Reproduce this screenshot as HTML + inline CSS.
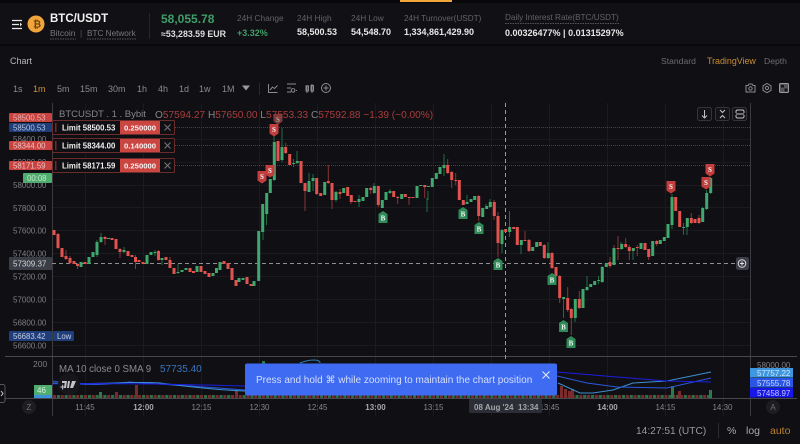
<!DOCTYPE html>
<html><head><meta charset="utf-8"><style>
html,body{margin:0;padding:0;width:800px;height:444px;overflow:hidden;background:#0a0a0d}
svg{display:block}
text{font-family:"Liberation Sans",sans-serif}
</style></head><body>
<svg width="800" height="444" viewBox="0 0 800 444" xmlns="http://www.w3.org/2000/svg">
<rect width="800" height="444" fill="#08080a"/>
<rect x="0" y="3" width="800" height="41" fill="#111115"/>
<rect x="0" y="46" width="800" height="398" fill="#101014"/>
<rect x="400" y="0" width="52" height="2" fill="#f0a63a"/>

<!-- header -->
<path d="M12 20.5H22M12 24.5H19M12 28.5H22" stroke="#e8e8e8" stroke-width="1.3" fill="none"/>
<path d="M20 22.5l2 2-2 2" fill="#e8e8e8"/>
<circle cx="36" cy="24" r="8.5" fill="#f2a53a"/>
<text x="33" y="27.5" font-size="10" font-weight="700" fill="#6d4310">₿</text>
<text x="50" y="22" font-size="11.5" font-weight="700" fill="#f2f2f2">BTC/USDT</text>
<text x="50" y="36" font-size="8.5" fill="#77777c">Bitcoin</text>
<text x="80" y="36" font-size="8.5" fill="#55555a">|</text>
<text x="87" y="36" font-size="8.2" fill="#77777c">BTC Network</text>
<path d="M50 39H76M87 39H136" stroke="#55555a" stroke-dasharray="1.5 1"/>
<rect x="149" y="13" width="1" height="26" fill="#26262b"/>
<text x="161" y="23" font-size="12" font-weight="700" fill="#3f9e68">58,055.78</text>
<text x="161" y="37" font-size="8.8" font-weight="700" fill="#dedede">≈53,283.59 EUR</text>
<text x="237" y="21" font-size="8.3" fill="#626267">24H Change</text>
<text x="237" y="36" font-size="9" font-weight="700" fill="#3f9e68">+3.32%</text>
<text x="297" y="21" font-size="8.3" fill="#626267">24H High</text>
<text x="297" y="35" font-size="9" font-weight="700" fill="#e6e6e6">58,500.53</text>
<text x="351" y="21" font-size="8.3" fill="#626267">24H Low</text>
<text x="351" y="35" font-size="9" font-weight="700" fill="#e6e6e6">54,548.70</text>
<text x="404" y="21" font-size="8.2" fill="#626267">24H Turnover(USDT)</text>
<text x="404" y="35" font-size="9" font-weight="700" fill="#e6e6e6">1,334,861,429.90</text>
<text x="505" y="20" font-size="8.2" fill="#626267">Daily Interest Rate(BTC/USDT)</text>
<path d="M505 23.5H619" stroke="#55555a" stroke-dasharray="1.5 1"/>
<text x="505" y="36" font-size="9" font-weight="700" fill="#e6e6e6">0.00326477% | 0.01315297%</text>

<!-- tabs -->
<text x="10" y="64" font-size="9" fill="#b9b9bd">Chart</text>
<text x="661" y="64" font-size="8.6" fill="#6c6c71">Standard</text>
<text x="707" y="64" font-size="8.9" fill="#c98d35">TradingView</text>
<text x="764" y="64" font-size="8.6" fill="#6c6c71">Depth</text>

<!-- toolbar -->
<g font-size="9" fill="#8a8a8f">
<text x="13" y="92">1s</text><text x="33" y="92" fill="#d08f35">1m</text><text x="57" y="92">5m</text><text x="80" y="92">15m</text><text x="108" y="92">30m</text><text x="137" y="92">1h</text><text x="158" y="92">4h</text><text x="179" y="92">1d</text><text x="199" y="92">1w</text><text x="222" y="92">1M</text>
</g>
<path d="M242 85.5h8l-4 5z" fill="#9a9a9e"/>
<rect x="259" y="83" width="1" height="12" fill="#2a2a2e"/>
<g fill="none" stroke="#8a8a8f" stroke-width="1">
<path d="M268.5 84v8.5h9M270 90l2.500-3 2 1.500 3-3"/>
<path d="M287 84h9M287 88h4M287 92h4M293 88.500a1.800 1.800 0 1 0 .1 0M296 90.500h1"/>
<path d="M307 85v8M306 86h2.500v5H306zM312 84v9M311 85.500h2.500v5.500H311z"/>
<circle cx="326" cy="88" r="4.500"/><path d="M326 85.500v5M323.500 88h5"/>
</g>
<g fill="none" stroke="#8a8a8f" stroke-width="1">
<path d="M746 85.500h2l1-1.500h3l1 1.500h2v6.500h-9z"/><circle cx="750.500" cy="88.500" r="1.700"/>
<path d="M767 83.500l4 2.300v4.600l-4 2.300-4-2.300v-4.600z"/><circle cx="767" cy="88" r="1.600"/>
</g>
<rect x="779.500" y="83.500" width="9" height="9" rx="1.200" fill="#55555a" stroke="#9a9a9e"/>
<path d="M781 85h3v2.500h-3zM784.500 88.500h3v3h-3z" fill="#16161a"/>

<!-- grid -->
<path d="M85.500 103V416M143.500 103V416M201.500 103V416M259.500 103V416M317.500 103V416M375.500 103V416M433.500 103V416M491.500 103V416M549.500 103V416M607.500 103V416M665.500 103V416M723.500 103V416M52 139.500H750M52 162.500H750M52 185.500H750M52 207.500H750M52 230.500H750M52 253.500H750M52 276.500H750M52 299.500H750M52 322.500H750M52 345.500H750" stroke="#1a1a1f" fill="none"/>
<path d="M52.500 103V416M750.500 103V416" stroke="#3b3b40" fill="none"/>
<path d="M5 356.500H797M5 398.500H797" stroke="#48484c" fill="none"/>

<!-- order lines -->
<g stroke="#7a2f2f" stroke-dasharray="1 1" fill="none">
<path d="M175 127.500H750M175 145.500H750M175 165.500H750"/>
</g>
<!-- crosshair -->
<path d="M505.500 103V360" stroke="#9a9a9e" stroke-dasharray="4 3" fill="none"/>
<path d="M52 263.500H737" stroke="#8f8f93" stroke-dasharray="4 3" fill="none"/>

<!-- candle wicks -->
<g fill="none" stroke-width="1">
<path stroke="#1f6e43" d="M101 233V243M124 247V253M155 250V256M162 258V265M178 264V274M97 240V257M263 204V240M266.500 193V225M274 133V181M282 128V162M293.500 159V167M297 151V164M309 173V192M313 174V191M336 191V202M359 195V207M374 183V194M427 198V212M390 189V194M428 191V200M444 154V176M467 195V204M486 204V209M490 199V208M502 229V253M509.500 211V237M521 240V254M548 242V259M563.500 297V318M575 299V322M587 276V291M598.500 276V284M602 266V283M621 242V250M633 248V260M672 194V229M683.500 223V235M687 218V235M702.500 207V222M706.500 190V210M710.500 177V194"/>
<path stroke="#8a3535" d="M58 233V249M66 250V260M70 256V264M77.500 263V269M105 236V245M120 248V258M135.500 255V269M158.500 250V261M170 257V268M285.700 143V154M301 161V183M305 183V211M316.700 178V195M328.300 165V184M332 183V209M340 189V199M351 196V204M370.700 187V194M378.300 186V207M397.700 196V204M409 197V205M424.700 185V198M447.700 159V174M451.700 171V188M455.700 173V185M478.700 195V221M494 200V220M498 212V257M525 231V241M529 239V252M544.300 244V259M552 252V269M559.700 275V303M567.700 287V312M571.300 308V335M579.300 291V309M610 257V268M614 245V262M618 236V260M625.700 238V248M629.300 245V260M637.300 245V256M648.700 249V260M656.700 240V246M691.300 213V224M699 215V224"/>
</g>
<!-- candle bodies -->
<path fill="none" stroke="#e2524f" stroke-width="3" d="M54 230V235M58 234V248M62 248V257M66 256V259M70 258V263M74 261V264M77.500 264V266M85 262V264M105 237V239M112 238V240M116 239V249M120 249V252M128 251V256M132 255V257M135.500 257V262M139 260V262M143 262V264M158.500 251V260M166 257V260M170 260V268M174 268V274M190 268V272M193.500 271V273M201 266V272M205 271V274M209 273V277M224 261V264M228 263V269M232 268V280M236 280V286M247 277V284M251 284V286M278 141V161M285.700 147V153M289.700 154V165M301 161V183M305 183V191M316.700 178V194M320.700 193V196M328.300 181V183M332 183V200M340 192V194M347.700 187V196M351.300 195V202M355 201V202M370.700 188V190M378.300 186V205M393.700 191V197M397.700 197V198M405.300 194V197M409.300 197V198M413 197V198M424.700 185V187M447.700 165V173M451.700 172V180M455.700 180V181M459.300 180V200M463.300 200V205M478.700 196V216M494.300 202V216M498 216V243M505.700 229V232M513.700 227V229M517.300 227V245M525 240V241M529 240V251M540.300 242V246M544.300 245V258M552 253V268M556 267V276M559.700 276V298M567.700 298V310M571.300 309V318M579.300 299V308M610 262V266M618 248V249M625.700 244V247M629.300 247V251M637.300 247V248M645 243V250M648.700 249V257M656.700 241V244M675.700 197V211M679.700 211V227M691.300 218V223M695 219V223M699 218V223"/>
<path fill="none" stroke="#3fa86d" stroke-width="3" d="M81 262V267M89 257V264M93 252V257M97 242V255M101 237V242M108.500 238V239M124 250V252M147 255V264M151 252V255M155 252V253M162 258V260M178 272V273M182 270V272M186 268V270M197 266V272M213 273V276M216.500 268V273M220 262V270M239 278V282M243 278V280M254 281V286M258.700 231V281M262.700 204V232M266.700 193V214M270.300 179V193M274.300 142V180M282 147V160M293.700 163V164M297.300 161V163M309 181V192M313 178V181M324.700 182V195M336 192V200M343.700 188V193M359 199V202M363 197V201M366.700 188V197M374.300 186V193M382.300 200V208M386 192V200M390 191V193M401.700 194V199M417 186V198M420.700 185V186M428.300 186V187M432.300 178V187M436.300 173V179M440 167V174M444 165V168M467 202V204M471 199V202M474.700 196V200M482.700 208V217M486.700 206V209M490.300 202V207M502 230V244M509.700 227V232M521.300 240V245M532.700 247V251M536.700 242V247M548.300 253V258M563.700 297V299M575.300 299V318M583 289V308M587 287V290M590.700 284V287M594.700 281V285M598.700 280V281M602.300 267V282M606.300 263V267M614 248V265M621.700 244V249M633.300 248V251M641 243V249M652.700 241V256M660.300 240V244M664.300 237V241M668 224V238M672 197V225M683.700 227V228M687.300 218V227M702.700 208V222M706.700 193V209M710.700 178V193"/>

<!-- S/B markers -->
<g font-size="7" font-weight="700" fill="#f4f4f4" text-anchor="middle">
<path d="M257.500 171h9v9.500l-4.500 3-4.500-3z" fill="#c23d3d"/><text x="262" y="179" style="font-family:'Liberation Serif',serif">S</text>
<path d="M265.500 165h9v9.500l-4.500 3-4.500-3z" fill="#c23d3d"/><text x="270" y="173" style="font-family:'Liberation Serif',serif">S</text>
<path d="M269.500 124h9v9.500l-4.500 3-4.500-3z" fill="#c23d3d"/><text x="274" y="132" style="font-family:'Liberation Serif',serif">S</text>
<path d="M273.500 114h9v7.500l-4.500 3-4.500-3z" fill="#7a3a3a"/><text x="278" y="122" fill="#aaa" style="font-family:'Liberation Serif',serif">S</text>
<path d="M666.500 181h9v9.500l-4.500 3-4.500-3z" fill="#c23d3d"/><text x="671" y="189" style="font-family:'Liberation Serif',serif">S</text>
<path d="M705.500 164h9v9.500l-4.500 3-4.500-3z" fill="#c23d3d"/><text x="710" y="172" style="font-family:'Liberation Serif',serif">S</text>
<path d="M701.500 177h9v9.500l-4.500 3-4.500-3z" fill="#c23d3d"/><text x="706" y="185" style="font-family:'Liberation Serif',serif">S</text>
<path d="M378.500 214l4.500-3 4.500 3v9h-9z" fill="#2f8a57"/><text x="383" y="220.500" style="font-family:'Liberation Serif',serif">B</text>
<path d="M458.500 210l4.500-3 4.500 3v9h-9z" fill="#2f8a57"/><text x="463" y="216.500" style="font-family:'Liberation Serif',serif">B</text>
<path d="M474.500 225l4.500-3 4.500 3v9h-9z" fill="#2f8a57"/><text x="479" y="231.500" style="font-family:'Liberation Serif',serif">B</text>
<path d="M493.500 261l4.500-3 4.500 3v9h-9z" fill="#2f8a57"/><text x="498" y="267.500" style="font-family:'Liberation Serif',serif">B</text>
<path d="M547.500 276l4.500-3 4.500 3v9h-9z" fill="#2f8a57"/><text x="552" y="282.500" style="font-family:'Liberation Serif',serif">B</text>
<path d="M559 323l4.500-3 4.500 3v9h-9z" fill="#2f8a57"/><text x="563.500" y="329.500" style="font-family:'Liberation Serif',serif">B</text>
<path d="M566.500 339l4.500-3 4.500 3v9h-9z" fill="#2f8a57"/><text x="571" y="345.500" style="font-family:'Liberation Serif',serif">B</text>
</g>

<!-- price axis -->
<g font-size="8" fill="#7e7e83">
<text x="13" y="142">58400.00</text><text x="13" y="165">58200.00</text><text x="13" y="188">58000.00</text><text x="13" y="211">57800.00</text><text x="13" y="233.500">57600.00</text><text x="13" y="256.500">57400.00</text><text x="13" y="279.500">57200.00</text><text x="13" y="302.500">57000.00</text><text x="13" y="325.500">56800.00</text><text x="13" y="348.500">56600.00</text>
</g>
<g font-size="7.800">
<rect x="9" y="113" width="43" height="9" rx="1" fill="#c8423f"/><text x="13" y="120.500" fill="#e6b4b4">58500.53</text>
<rect x="9" y="123" width="43" height="9" rx="1" fill="#1f3d78"/><text x="13" y="130.500" fill="#b7c4de">58500.53</text>
<rect x="9" y="141" width="43" height="9" rx="1" fill="#c8423f"/><text x="13" y="148.500" fill="#ecc4c4">58344.00</text>
<rect x="9" y="161" width="43" height="9" rx="1" fill="#c8423f"/><text x="13" y="168.500" fill="#ecc4c4">58171.59</text>
<rect x="23" y="173" width="29" height="10" rx="1" fill="#4fae6f"/><text x="27" y="181" fill="#bfe6cc">00:08</text>
<rect x="9" y="257" width="43" height="13" rx="1" fill="#3b3e47"/><text x="13" y="266.500" font-size="8" fill="#d6d6d8">57309.37</text>
<rect x="9" y="331" width="43" height="10" rx="1" fill="#1f3d78"/><text x="13" y="339" fill="#c3cee6">56683.42</text>
<rect x="53" y="331" width="21" height="10" rx="1.500" fill="#1f3d78"/><text x="57" y="339" fill="#c3cee6">Low</text>
</g>

<!-- order widgets -->
<g>
<rect x="52.500" y="120.500" width="122" height="14" rx="1" fill="#101014" stroke="#6b2c2c"/>
<rect x="55" y="123" width="1.500" height="9" fill="#6b2c2c"/>
<text x="62" y="130.500" font-size="7.800" font-weight="700" fill="#f0f0f0">Limit 58500.53</text>
<rect x="120" y="121" width="40" height="13" fill="#cb4541"/>
<text x="124" y="130.500" font-size="7.700" font-weight="700" fill="#f6f6f6">0.250000</text>
<path d="M164.500 124.500l6 6m0-6l-6 6" stroke="#77777a" fill="none"/>
<rect x="52.500" y="138.500" width="122" height="14" rx="1" fill="#101014" stroke="#6b2c2c"/>
<rect x="55" y="141" width="1.500" height="9" fill="#6b2c2c"/>
<text x="62" y="148.500" font-size="7.800" font-weight="700" fill="#f0f0f0">Limit 58344.00</text>
<rect x="120" y="139" width="40" height="13" fill="#cb4541"/>
<text x="124" y="148.500" font-size="7.700" font-weight="700" fill="#f6f6f6">0.140000</text>
<path d="M164.500 142.500l6 6m0-6l-6 6" stroke="#77777a" fill="none"/>
<rect x="52.500" y="158.500" width="122" height="14" rx="1" fill="#101014" stroke="#6b2c2c"/>
<rect x="55" y="161" width="1.500" height="9" fill="#6b2c2c"/>
<text x="62" y="168.500" font-size="7.800" font-weight="700" fill="#f0f0f0">Limit 58171.59</text>
<rect x="120" y="159" width="40" height="13" fill="#cb4541"/>
<text x="124" y="168.500" font-size="7.700" font-weight="700" fill="#f6f6f6">0.250000</text>
<path d="M164.500 162.500l6 6m0-6l-6 6" stroke="#77777a" fill="none"/>
</g>

<!-- legend -->
<text x="59" y="117" font-size="9.500" fill="#85858a">BTCUSDT . 1 . Bybit</text>
<text x="155" y="118" font-size="10.150" fill="#85858a">O<tspan fill="#a83c3c">57594.27</tspan> H<tspan fill="#a83c3c">57650.00</tspan> L<tspan fill="#a83c3c">57553.33</tspan> C<tspan fill="#a83c3c">57592.88</tspan> <tspan fill="#a83c3c">−1.39 (−0.00%)</tspan></text>

<!-- top right chart buttons -->
<g fill="#141418" stroke="#34343a">
<rect x="697.500" y="107.500" width="14" height="13" rx="2"/>
<rect x="715.500" y="107.500" width="14" height="13" rx="2"/>
<rect x="732.500" y="107.500" width="14" height="13" rx="2"/>
</g>
<g fill="none" stroke="#c4c4c8" stroke-width="1">
<path d="M704.500 110v8M702 115.500l2.500 2.500 2.500-2.500"/>
<path d="M720 110l2.500 2.500 2.500-2.500M720 118l2.500-2.500 2.500 2.500"/>
<path d="M736 113v-1.500a1.500 1.500 0 0 1 1.500-1.500h5a1.500 1.500 0 0 1 1.500 1.500v1.500M744 115v1.500a1.500 1.500 0 0 1-1.500 1.500h-5a1.500 1.500 0 0 1-1.500-1.500V115M736 114h8"/>
</g>
<rect x="736" y="257" width="13" height="13" rx="2.500" fill="#3b3e47"/>
<circle cx="742" cy="263.500" r="3.800" fill="none" stroke="#dcdcdc"/><path d="M740 263.500h4M742 261.500v4" stroke="#dcdcdc"/>

<!-- indicator pane -->
<text x="33" y="367" font-size="8.500" fill="#7e7e83">200</text>
<text x="59" y="372" font-size="9.700" fill="#8a8a8f">MA 10 close 0 SMA 9</text>
<text x="160" y="372" font-size="10" fill="#3a73bd">57735.40</text>
<text x="757" y="368" font-size="8" fill="#7e7e83">58000.00</text>
<!-- volume -->
<path d="M53 396.500H712" stroke="#7a2c2c" stroke-width="3" stroke-dasharray="3 .87" fill="none"/>
<path d="M57 396.500H712" stroke="#2a6f47" stroke-width="3" stroke-dasharray="3 4.740" fill="none"/>
<path d="M135 385h3v13h-3zM115 392h3v6h-3zM235 390h3v8h-3zM560 386h3v12h-3zM564 389h3v9h-3zM568 391h3v7h-3zM571 389h3v9h-3zM678 391h3v7h-3z" fill="#7a2c2c"/>
<path d="M99 392h3v6h-3zM671 386h3v12h-3zM709 390h3v8h-3zM262 361h3v3h-3z" fill="#2f7a4d"/>
<path d="M53 381C90 387 110 384 130 382C170 385 210 387 245 390" stroke="#2a56d8" fill="none"/>
<path d="M53 383C100 385 130 381 160 383C190 387 220 390 245 391" stroke="#3a8fd6" fill="none"/>
<path d="M53 384C100 383 170 384 245 386" stroke="#1c1ce0" fill="none"/>
<path d="M558 383L580 393L593 393L613 390L633 383L667 381L711 372" stroke="#3d8fd0" fill="none"/>
<path d="M557 376L587 383L617 387L667 388L711 378" stroke="#2d57dc" fill="none"/>
<path d="M557 372L617 377L667 381L711 382" stroke="#1d1de0" fill="none"/>
<path d="M300 363C310 359 320 359 320 363" stroke="#2f7fc0" fill="none"/>
<circle cx="69" cy="384" r="11" fill="#16161b"/>
<text x="60" y="390" font-size="9" font-weight="700" fill="#c4c4c8">+</text>
<path d="M62 381h5l-1 7h-2l.7-5h-2.700zM68 381h2l-1 7h-2zM72 381h4l-3 7h-3z" fill="#c4c4c8"/>
<rect x="34" y="385" width="18" height="10" fill="#4fae6f"/>
<text x="37" y="393" font-size="8" fill="#d6efdd">46</text>
<rect x="34" y="395" width="18" height="3" fill="#3d8fd8"/>
<rect x="-3" y="384.500" width="8" height="18" rx="2" fill="#101014" stroke="#55555a"/>
<path d="M1 391l2 2.500-2 2.500" stroke="#d0d0d0" fill="none"/>
<g font-size="8">
<rect x="750" y="368" width="43" height="9.500" fill="#3f97e0"/><text x="757" y="376" fill="#cfe6fa">57757.22</text>
<rect x="750" y="378" width="43" height="9.500" fill="#2a56e6"/><text x="757" y="386" fill="#c9d6fa">57555.78</text>
<rect x="750" y="388" width="43" height="9.500" fill="#1717e8"/><text x="757" y="396" fill="#c8c8fa">57458.97</text>
</g>

<!-- time axis -->
<g font-size="8" fill="#84848a" text-anchor="middle">
<text x="85" y="410">11:45</text><text x="143.500" y="410" font-weight="700" fill="#a8a8ac">12:00</text><text x="201.500" y="410">12:15</text><text x="259.500" y="410">12:30</text><text x="317.500" y="410">12:45</text><text x="375.500" y="410" font-weight="700" fill="#a8a8ac">13:00</text><text x="433.500" y="410">13:15</text><text x="549.500" y="410">13:45</text><text x="607.500" y="410" font-weight="700" fill="#a8a8ac">14:00</text><text x="665.500" y="410">14:15</text><text x="722.500" y="410">14:30</text>
</g>
<rect x="469" y="399" width="73" height="14" rx="1" fill="#2b2e36"/>
<text x="474" y="410" font-size="8" font-weight="700" fill="#a6a6aa">08 Aug '24</text>
<text x="518" y="410" font-size="8" font-weight="700" fill="#a6a6aa">13:34</text>
<circle cx="29" cy="407" r="7" fill="#1d1d22"/><text x="29" y="410" font-size="8" fill="#6f6f74" text-anchor="middle">Z</text>
<circle cx="773" cy="407" r="7" fill="#1d1d22"/><text x="773" y="410" font-size="8" fill="#6f6f74" text-anchor="middle">A</text>

<!-- toast -->
<rect x="245" y="363.500" width="312" height="32" rx="2" fill="#3e6bf2"/>
<text x="256" y="383" font-size="10" fill="#d4defc">Press and hold ⌘ while zooming to maintain the chart position</text>
<path d="M542.500 371.500l7 7m0-7l-7 7" stroke="#e6ecff" fill="none"/>

<!-- footer -->
<text x="636" y="434" font-size="10.200" fill="#9a9a9e">14:27:51 (UTC)</text>
<rect x="718" y="423" width="1" height="15" fill="#2d2d31"/>
<text x="727" y="434" font-size="10.500" fill="#a8a8ac">%</text>
<text x="746" y="434" font-size="10.500" fill="#a8a8ac">log</text>
<text x="770" y="434" font-size="10.500" fill="#b9812f">auto</text>
</svg>
</body></html>
